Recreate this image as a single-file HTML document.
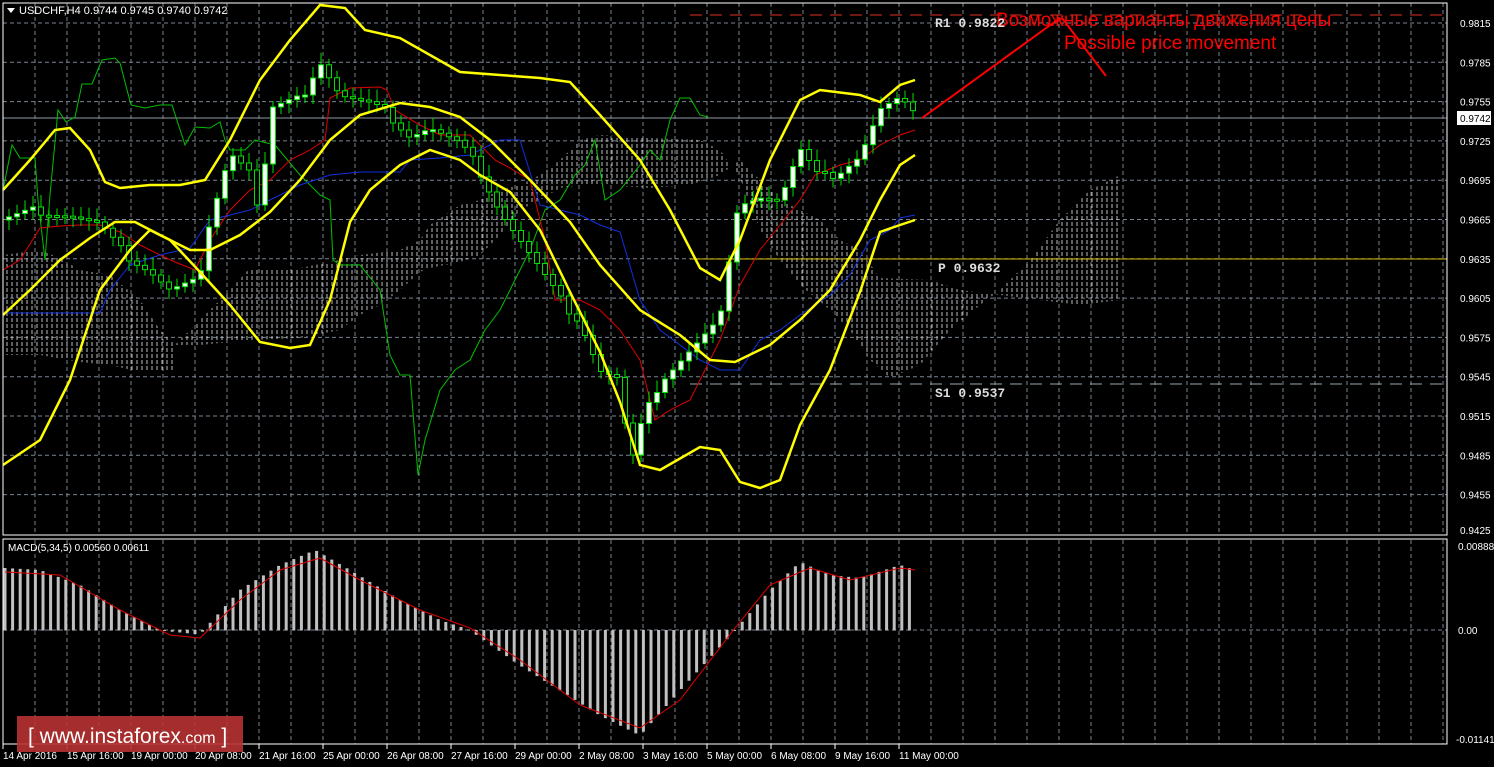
<!DOCTYPE html>
<html><head><meta charset="utf-8"><style>
html,body{margin:0;padding:0;background:#000;width:1494px;height:767px;overflow:hidden}
svg{display:block}
text{font-family:"Liberation Sans","DejaVu Sans",sans-serif}
text.m{font-family:"Liberation Mono",monospace}
</style></head><body>
<svg id="c" width="1494" height="767" xmlns="http://www.w3.org/2000/svg">
<defs>
<pattern id="h" width="5" height="6" patternUnits="userSpaceOnUse">
<line x1="2" y1="0" x2="2" y2="4" stroke="#ddd" stroke-width="1"/>
</pattern>
</defs>
<g id="grid" stroke="#7a8490" stroke-dasharray="4,3" stroke-width="1"></g>
<g fill="url(#h)" opacity="0.85">
<polygon points="3,255 40,250 60,258 80,270 110,275 140,300 160,330 175,345 175,370 140,372 110,365 80,362 40,355 3,355"/>
<polygon points="175,345 200,320 230,290 250,268 300,268 330,262 360,255 400,250 420,240 430,225 460,205 480,200 500,190 520,185 540,175 560,160 580,140 600,135 650,138 700,140 720,150 740,178 760,230 780,260 800,285 830,310 850,330 870,360 890,378 920,365 950,330 980,305 1000,290 1030,260 1060,220 1090,190 1120,175 1120,300 1080,305 1040,300 1000,295 960,290 930,280 880,278 860,250 840,240 820,220 780,200 760,180 740,160 720,175 690,185 650,188 620,186 590,184 560,188 540,200 520,210 500,235 480,255 460,262 430,268 420,272 400,290 380,305 360,315 340,330 300,338 250,340 200,345"/>
</g>
<line x1="3" y1="118" x2="1447" y2="118" stroke="#8e99a4" stroke-width="1"/>
<line x1="690" y1="15" x2="1447" y2="15" stroke="#e03020" stroke-width="1" stroke-dasharray="12,8"/>
<line x1="690" y1="259" x2="1447" y2="259" stroke="#d4b400" stroke-width="1"/>
<line x1="690" y1="384" x2="1447" y2="384" stroke="#9aa" stroke-width="1" stroke-dasharray="12,8"/>
<polyline fill="none" stroke="#00c000" stroke-width="1" points="3,190 12,145 20,158 35,158 38,200 45,260 50,195 58,110 66,122 75,117 82,84 92,84 102,60 115,58 120,63 131,105 145,108 160,105 172,105 185,145 195,127 210,128 220,122 225,140 230,150 245,150 255,140 275,145 300,175 320,195 330,200 333,260 340,265 360,265 380,290 390,355 400,375 410,375 418,475 425,440 440,390 455,370 470,360 485,330 500,310 510,290 520,270 530,250 545,210 560,200 575,175 585,165 595,140 605,200 620,190 640,165 650,150 660,160 670,120 680,98 690,98 700,115 708,117"/>
<polyline fill="none" stroke="#e00000" stroke-width="1" points="3,270 20,260 40,228 60,226 80,225 100,225 120,232 140,245 160,255 175,262 195,270 210,240 230,210 250,190 270,180 290,160 310,150 325,140 330,98 350,88 380,87 387,90 395,110 420,125 440,135 470,135 480,145 495,160 510,168 530,180 545,240 555,300 580,300 600,310 620,330 640,360 655,420 670,410 690,400 705,370 720,340 740,285 760,250 780,225 800,200 815,175 840,165 860,160 880,145 900,135 915,130"/>
<polyline fill="none" stroke="#1030e0" stroke-width="1" points="3,313 100,313 110,290 130,265 160,255 190,248 210,220 250,210 270,200 300,185 330,175 360,172 400,172 410,160 440,158 470,155 500,140 520,140 540,205 560,210 580,215 600,225 620,232 640,300 660,330 680,345 700,360 720,370 740,370 760,340 780,330 800,315 830,295 850,275 870,240 890,230 900,218 915,215"/>
<g id="candles"></g>
<g fill="none" stroke="#ffff00" stroke-width="2.5">
<polyline points="3,190 30,160 55,130 70,128 90,150 105,182 120,188 150,185 180,185 205,180 230,140 260,80 290,40 320,5 345,8 365,30 400,38 460,72 500,75 540,78 570,82 600,115 640,160 670,210 700,268 720,280 740,240 770,160 800,100 820,90 860,95 880,102 900,85 915,80"/>
<polyline points="3,315 30,290 60,260 90,238 115,222 135,222 160,235 190,250 210,250 240,235 270,212 300,180 330,140 360,115 400,103 430,107 460,117 490,140 530,180 570,222 600,265 640,310 680,335 710,360 735,362 770,345 800,320 830,290 860,240 880,200 900,165 915,155"/>
<polyline points="3,465 40,440 70,380 100,290 130,250 150,230 170,240 200,272 230,305 260,342 290,348 310,345 330,300 350,222 370,190 400,165 430,150 460,160 480,175 510,192 540,230 570,292 600,352 620,402 640,465 660,470 700,447 720,450 740,482 760,488 780,480 800,425 830,370 860,292 880,232 900,225 915,220"/>
</g>
<g stroke="#ff0000" stroke-width="2"><line x1="922" y1="118" x2="1060" y2="18"/><line x1="1062" y1="18" x2="1106" y2="76"/></g>
<text x="996" y="26" fill="#ff0000" font-size="19">Возможные варианты движения цены</text>
<text x="1064" y="49" fill="#ff0000" font-size="19">Possible price movement</text>
<g font-size="13" fill="#ddd" font-weight="bold">
<text class="m" x="935" y="27">R1 0.9822</text>
<text class="m" x="938" y="272">P  0.9632</text>
<text class="m" x="935" y="397">S1 0.9537</text>
</g>
<polygon points="7,8 15,8 11,13" fill="#fff"/>
<text x="19" y="14" fill="#fff" font-size="11">USDCHF,H4  0.9744 0.9745 0.9740 0.9742</text>
<text x="8" y="551" fill="#fff" font-size="10">MACD(5,34,5) 0.00560 0.00611</text>
<g id="macd"></g>
<rect x="3" y="3" width="1444" height="532" fill="none" stroke="#fff" stroke-width="1"/>
<rect x="3" y="539" width="1444" height="205" fill="none" stroke="#fff" stroke-width="1"/>
<g id="axis" fill="#fff" font-size="10"></g>
<rect x="1457" y="111" width="34" height="14" fill="#fff"/>
<text x="1460" y="122" fill="#000" font-size="10">0.9742</text>
<rect x="17" y="716" width="226" height="36" fill="#b83232" opacity="0.9"/>
<text x="28" y="743" fill="#fff" font-size="21">[  www.instaforex<tspan font-size="16">.com</tspan> ]</text>
</svg>
<script>
(function(){
var NS="http://www.w3.org/2000/svg";
function el(p,t,a,txt){var e=document.createElementNS(NS,t);for(var k in a)e.setAttribute(k,a[k]);if(txt)e.textContent=txt;p.appendChild(e);return e;}
var g=document.getElementById('grid');
var x,y,i;
for(x=35;x<1447;x+=32)el(g,'line',{x1:x,y1:3,x2:x,y2:535});
for(x=35;x<1447;x+=32)el(g,'line',{x1:x,y1:540,x2:x,y2:744});
var ax=document.getElementById('axis');
for(i=0;i<14;i++){y=23+i*39.3;if(y>533)y=530;else el(g,'line',{x1:3,y1:y,x2:1447,y2:y});
el(ax,'text',{x:1460,y:y+4},(0.9815-i*0.003).toFixed(4));}
el(g,'line',{x1:3,y1:630,x2:1447,y2:630});
el(ax,'text',{x:1458,y:550},'0.00888');el(ax,'text',{x:1458,y:634},'0.00');el(ax,'text',{x:1456,y:743},'-0.01141');
var lab=["14 Apr 2016","15 Apr 16:00","19 Apr 00:00","20 Apr 08:00","21 Apr 16:00","25 Apr 00:00","26 Apr 08:00","27 Apr 16:00","29 Apr 00:00","2 May 08:00","3 May 16:00","5 May 00:00","6 May 08:00","9 May 16:00","11 May 00:00"];
for(i=0;i<lab.length;i++){x=3+i*64;el(ax,'text',{x:x,y:759},lab[i]);el(ax,'line',{x1:x,y1:744,x2:x,y2:749,stroke:'#fff'});}
function interp(pts,x){for(var j=1;j<pts.length;j++){if(x<=pts[j][0]){var a=pts[j-1],b=pts[j];return a[1]+(b[1]-a[1])*(x-a[0])/(b[0]-a[0]);}}return pts[pts.length-1][1];}
var tr=[[5,220],[40,210],[70,215],[100,225],[120,250],[150,270],[170,290],[200,280],[215,200],[230,150],[250,170],[260,220],[270,110],[300,100],[320,60],[340,95],[370,105],[390,115],[410,135],[430,128],[460,145],[480,170],[500,210],[520,240],[540,270],[560,300],[580,320],[600,370],[620,380],[630,470],[640,430],[660,380],[690,350],[720,320],[740,200],[760,195],[780,200],[800,150],[820,180],[840,170],[860,155],[880,110],[900,100],[915,118]];
var cg=document.getElementById('candles');var prev=interp(tr,5);
for(x=9;x<=915;x+=8){var c=interp(tr,x)+((x*37)%11-5);var o=prev;prev=c;
var tp=Math.min(o,c),bt=Math.max(o,c);if(bt-tp<2)bt=tp+2;
el(cg,'line',{x1:x,y1:tp-6-(x%7),x2:x,y2:bt+6+(x%5),stroke:'#00e000','stroke-width':1});
el(cg,'rect',{x:x-2.5,y:tp,width:5,height:bt-tp,fill:c<o?'#fff':'#000',stroke:'#00e000','stroke-width':1});}
var mp=[[5,568],[40,570],[80,585],[120,610],[160,630],[200,634],[240,590],[280,565],[315,550],[350,570],[400,600],[440,620],[470,630],[520,665],[560,690],[600,715],[640,735],[680,690],[735,630],[770,590],[800,562],[830,575],[860,578],[900,565],[915,570]];
var sp=[[5,572],[60,575],[120,610],[170,635],[200,638],[240,600],[280,570],[320,558],[360,580],[420,610],[470,628],[520,660],[580,705],[640,728],[680,700],[735,628],[770,585],[810,568],[850,580],[900,568],[915,570]];
var mg=document.getElementById('macd');
for(x=5;x<=915;x+=7.6){y=interp(mp,x);el(mg,'rect',{x:x-1.5,y:Math.min(y,630),width:3,height:Math.abs(y-630)+0.5,fill:'#c0c0c0'});}
var s="";for(x=5;x<=915;x+=5)s+=x+","+interp(sp,x)+" ";
el(mg,'polyline',{points:s,fill:'none',stroke:'#e00000','stroke-width':1});
})();
</script>
</body></html>
